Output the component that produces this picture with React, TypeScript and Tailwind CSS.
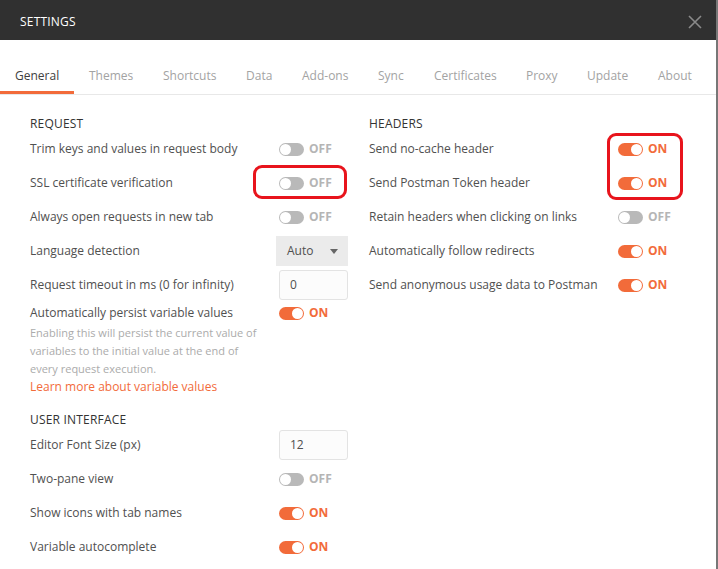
import React from "react"

const tabs = [
  { name: "General", w: "w-[74px]" },
  { name: "Themes", w: "w-[74px]" },
  { name: "Shortcuts", w: "w-[83px]" },
  { name: "Data", w: "w-[56px]" },
  { name: "Add-ons", w: "w-[76px]" },
  { name: "Sync", w: "w-[56px]" },
  { name: "Certificates", w: "w-[92px]" },
  { name: "Proxy", w: "w-[61px]" },
  { name: "Update", w: "w-[71px]" },
  { name: "About", w: "w-[60px]" },
]

const Toggle = ({ on }: { on: boolean }) => (
  <div className="flex items-center gap-[5px]">
    <div
      className={`relative w-[25px] h-[13px] rounded-full ${on ? "bg-[#f26b3a]" : "bg-[#b9b9b9]"}`}
    >
      <span
        className={`absolute top-[1px] h-[11px] w-[11px] rounded-full bg-white ${on ? "right-[1px]" : "left-[1px]"}`}
      />
    </div>
    <span className={`text-[12px] font-bold ${on ? "text-[#f26b3a]" : "text-[#b5b5b5]"}`}>
      {on ? "ON" : "OFF"}
    </span>
  </div>
)

const Row = ({ label, children, labelW }: { label: string; children: React.ReactNode; labelW: string }) => (
  <div className="flex items-center h-[34px]">
    <div className={`${labelW} shrink-0 text-[12px] text-[#505050]`}>{label}</div>
    {children}
  </div>
)

const Heading = ({ text }: { text: string }) => (
  <div className="h-[18px] flex items-center pt-[1px] text-[12px] text-[#333] tracking-[0.2px]">{text}</div>
)

export default function App() {
  return (
    <div
      className="w-[718px] h-[569px] bg-white border-r-2 border-[#777] overflow-hidden flex flex-col"
      style={{ fontFamily: '"Open Sans", "Noto Sans", sans-serif' }}
    >
      {/* Title bar */}
      <header className="h-[40px] shrink-0 bg-[#303030] flex items-center justify-between pt-[3px] pl-[20px] pr-[14px]">
        <span className="text-[12px] text-white tracking-[0.2px]">SETTINGS</span>
        <svg width="14" height="14" viewBox="0 0 14 14" className="text-[#8a8a8a]">
          <path d="M1 1L13 13M13 1L1 13" stroke="currentColor" strokeWidth="1.6" />
        </svg>
      </header>

      {/* Tabs */}
      <nav className="h-[55px] shrink-0 flex items-end border-b border-[#e8e8e8]">
        {tabs.map((t, i) => (
          <div
            key={t.name}
            className={`${t.w} shrink-0 h-full flex items-center pt-[20px] pl-[15px] text-[12px] whitespace-nowrap ${
              i === 0
                ? "border-b-[3px] border-[#f26b3a] text-[#404040]"
                : "pb-[3px] text-[#a3a3a3]"
            }`}
          >
            {t.name}
          </div>
        ))}
      </nav>

      {/* Content */}
      <main className="flex pt-[19px] pl-[30px]">
        {/* Left column */}
        <section className="w-[318px] shrink-0 flex flex-col">
          <Heading text="REQUEST" />
          <Row label="Trim keys and values in request body" labelW="w-[249px]">
            <Toggle on={false} />
          </Row>
          <Row label="SSL certificate verification" labelW="w-[249px]">
            <div className="relative">
              <Toggle on={false} />
              <div className="absolute -left-[26px] -top-[9px] w-[94px] h-[34px] rounded-[9px] border-[3px] border-[#e8141c]" />
            </div>
          </Row>
          <Row label="Always open requests in new tab" labelW="w-[249px]">
            <Toggle on={false} />
          </Row>
          <Row label="Language detection" labelW="w-[246px]">
            <div className="w-[72px] h-[30px] bg-[#ebebeb] flex items-center justify-between pl-[11px] pr-[10px] text-[12px] text-[#505050]">
              <span>Auto</span>
              <svg width="8" height="5" viewBox="0 0 8 5">
                <path d="M0 0H8L4 5Z" fill="#666" />
              </svg>
            </div>
          </Row>
          <Row label="Request timeout in ms (0 for infinity)" labelW="w-[249px]">
            <div className="w-[69px] h-[30px] rounded-[3px] border border-[#e3e3e3] bg-[#fcfcfc] flex items-center pl-[10px] text-[12px] text-[#505050]">
              0
            </div>
          </Row>
          <div className="flex items-center h-[22px]">
            <div className="w-[249px] shrink-0 text-[12px] text-[#505050]">Automatically persist variable values</div>
            <Toggle on={true} />
          </div>
          <p className="w-[232px] text-[11px] leading-[18px] text-[#ababab]">
            Enabling this will persist the current value of variables to the initial value at the end of every
            request execution.
          </p>
          <div className="h-[18px] flex items-center text-[12px] text-[#f26b3a]">Learn more about variable values</div>

          <div className="mt-[14px]">
            <Heading text="USER INTERFACE" />
          </div>
          <Row label="Editor Font Size (px)" labelW="w-[249px]">
            <div className="w-[69px] h-[30px] rounded-[3px] border border-[#e3e3e3] bg-[#fcfcfc] flex items-center pl-[10px] text-[12px] text-[#505050]">
              12
            </div>
          </Row>
          <Row label="Two-pane view" labelW="w-[249px]">
            <Toggle on={false} />
          </Row>
          <Row label="Show icons with tab names" labelW="w-[249px]">
            <Toggle on={true} />
          </Row>
          <Row label="Variable autocomplete" labelW="w-[249px]">
            <Toggle on={true} />
          </Row>
        </section>

        {/* Right column */}
        <section className="ml-[21px] w-[320px] flex flex-col">
          <Heading text="HEADERS" />
          <div className="relative">
            <Row label="Send no-cache header" labelW="w-[249px]">
              <Toggle on={true} />
            </Row>
            <Row label="Send Postman Token header" labelW="w-[249px]">
              <Toggle on={true} />
            </Row>
            <div className="absolute left-[238px] top-[1px] w-[76px] h-[67px] rounded-[9px] border-[3px] border-[#e8141c]" />
          </div>
          <Row label="Retain headers when clicking on links" labelW="w-[249px]">
            <Toggle on={false} />
          </Row>
          <Row label="Automatically follow redirects" labelW="w-[249px]">
            <Toggle on={true} />
          </Row>
          <Row label="Send anonymous usage data to Postman" labelW="w-[249px]">
            <Toggle on={true} />
          </Row>
        </section>
      </main>
    </div>
  )
}
